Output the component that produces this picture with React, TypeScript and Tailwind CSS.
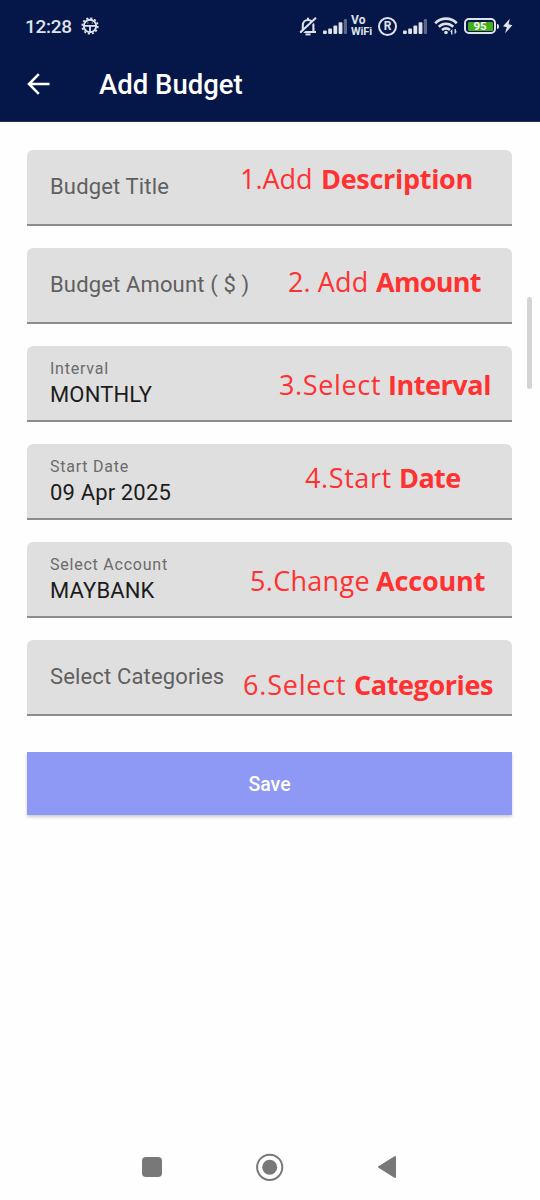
import clsx from "clsx";

const fields = [
    { label: "Budget Title", value: "", step: "1.Add", target: "Description", place: "left-[213px] top-[11px]", stepStyle: "w-[81px]", targetStyle: "tracking-[-0.3px]" },
    { label: "Budget Amount ( $ )", value: "", step: "2. Add", target: "Amount", place: "left-[261px] top-4", stepStyle: "w-[88px] tracking-[0.1px]", targetStyle: "tracking-[-0.7px]" },
    { label: "Interval", value: "MONTHLY", step: "3.Select", target: "Interval", place: "left-[252px] top-[21px]", stepStyle: "w-[109px] tracking-[0.65px]", targetStyle: "tracking-[-0.45px]" },
    { label: "Start Date", value: "09 Apr 2025", step: "4.Start", target: "Date", place: "left-[278px] top-4", stepStyle: "w-[94px] tracking-[0.6px]", targetStyle: "tracking-[-0.6px]" },
    { label: "Select Account", value: "MAYBANK", step: "5.Change", target: "Account", place: "left-[223px] top-[21px]", stepStyle: "w-[126px] tracking-[0.3px]", targetStyle: "tracking-[-0.15px]" },
    { label: "Select Categories", value: "", step: "6.Select", target: "Categories", place: "left-[216px] top-[27px]", stepStyle: "w-[111px] tracking-[0.8px]", targetStyle: "tracking-[-0.4px]" },
];

function Signal({ className }: { className?: string }) {
    return (
        <svg className={clsx("h-[15px] w-[25px] shrink-0", className)} viewBox="0 0 25 15" fill="#dfe2ea">
            <rect x="0" y="11.5" width="3.8" height="3.5" rx="1" />
            <rect x="5.2" y="9.5" width="3.8" height="5.5" rx="1" />
            <rect x="10.4" y="6.5" width="3.8" height="8.5" rx="1" />
            <rect x="15.6" y="3.3" width="3.8" height="11.7" rx="1" />
            <rect x="20.8" y="0" width="3.2" height="15" rx="1" opacity="0.4" />
        </svg>
    );
}

function StatusBar() {
    return (
        <div className="flex h-[52px] items-center pl-[25px] text-[#dfe2ea]">
            <span className="w-[56px] pt-0.5 text-[19px] leading-6 font-medium tracking-[-0.3px]">12:28</span>
            <svg className="h-[18px] w-[18px] shrink-0" viewBox="0 0 18 18" fill="none" stroke="currentColor">
                <circle cx="9" cy="9" r="6.2" strokeWidth="1.9" />
                <circle cx="9" cy="9" r="7.7" strokeWidth="1.8" strokeDasharray="2.1 1.932" />
                <path d="M3 8.8h12M9 9v6" strokeWidth="1.8" />
                <path d="M6.3 6h1M10.7 6h1" strokeWidth="1.2" />
            </svg>

            <svg className="ml-[200px] h-[19px] w-[18px] shrink-0" viewBox="0 0 18 19" fill="none" stroke="currentColor" strokeWidth="2.1">
                <path d="M1 15h16M3.8 15V8.3C3.8 5 6 3 9 3s5.4 2 5.4 5.3V15M9 3V.8" />
                <path d="M17.8 2 2.6 16.4" stroke="#051649" strokeWidth="1.6" />
                <path d="M17 .8 1.2 15.6" />
                <path d="M6.5 17.4h5" strokeWidth="2" />
            </svg>
            <Signal className="ml-[6px]" />
            <div className="ml-[3px] flex w-[23px] shrink-0 flex-col text-[11px] leading-[11px] font-bold">
                <span className="h-[11px] text-[12px] tracking-[0.3px]">Vo</span>
                <span className="h-[11px] tracking-[-0.1px]">WiFi</span>
            </div>
            <div className="ml-[4px] flex h-[19px] w-[19px] shrink-0 items-center justify-center rounded-full border-2 border-[#dfe2ea] text-[12px] leading-none font-bold">R</div>
            <Signal className="ml-[6px]" />
            <svg className="ml-[6px] h-[18px] w-[24px] shrink-0" viewBox="0 0 24 18" fill="none" stroke="currentColor" strokeWidth="2.6">
                <path d="M1.2 6.2C7.4.1 16.6.1 22.8 6.2" />
                <path d="M4.7 9.8c4.3-4 10.3-4 14.6 0" />
                <path d="M8 13.1c2.4-2.1 5.6-2.1 8 0" />
                <circle cx="12" cy="15.5" r="1.8" fill="currentColor" stroke="none" />
                <path d="M16 15.1 18.4 12v5.5h-1.3v-2.4zM23 14.5l-2.4 3.1v-5.5h1.3v2.4z" fill="currentColor" stroke="none" />
            </svg>
            <div className="ml-[6px] flex h-4 w-8 shrink-0 rounded-[5px] border-2 border-[#dfe2ea] p-[1.5px]">
                <div className="flex flex-1 items-center justify-center rounded-[1px] bg-[#43ad1c] pt-px text-[11.5px] leading-none font-bold text-white">95</div>
            </div>
            <div className="ml-px h-[5px] w-[2px] rounded-r bg-[#dfe2ea]"></div>
            <svg className="ml-[3px] h-[16px] w-[11px] shrink-0" viewBox="0 0 11 16" fill="currentColor">
                <path d="M7.8.7 1 8.3l3.8 1L3 15.3l7.4-8L6.6 6.2z" />
            </svg>
        </div>
    );
}

function Header() {
    return (
        <header className="h-[122px] border-b border-[#302f5d] bg-[#051649]">
            <StatusBar />
            <div className="flex h-[64px] items-center pl-[27px] text-white">
                <svg className="h-[22px] w-[23px]" viewBox="0 0 23 22" fill="none" stroke="currentColor" strokeWidth="2.5">
                    <path d="M22.5 11H2.5M11.8 1.2 2 11l9.8 9.8" />
                </svg>
                <h1 className="ml-[49px] pt-px text-[27.5px] leading-8 font-medium">Add Budget</h1>
            </div>
        </header>
    );
}

function Field({ label, value, step, target, place, stepStyle, targetStyle }: (typeof fields)[number]) {
    return (
        <div className="relative h-[76px] rounded-t-md border-b-2 border-[#8c8c8c] bg-[#dfdfdf] pl-[23px]">
            {value ? (
                <div className="flex flex-col pt-[13px]">
                    <span className="text-base leading-5 tracking-[0.77px] text-[#6b6b6b]">{label}</span>
                    <span className="text-[22px] leading-8 tracking-[0.15px] text-[#1c1c1c]">{value}</span>
                </div>
            ) : (
                <div className="pt-[22px] text-[22px] leading-[30px] tracking-[0.15px] text-[#606060]">{label}</div>
            )}
            <div className={clsx("absolute flex font-['Open_Sans',sans-serif] text-[27px] leading-9 whitespace-nowrap text-[#ff3131]", place)}>
                <span className={clsx("font-[370]", stepStyle)}>{step}</span>
                <span className={clsx("font-bold", targetStyle)}>{target}</span>
            </div>
        </div>
    );
}

export default function App() {
    return (
        <div className="relative flex h-[1200px] w-[540px] flex-col overflow-hidden bg-[#fefefe] font-[Roboto,sans-serif]">
            <Header />
            <main className="flex flex-1 flex-col pt-7 pr-7 pl-[27px]">
                <div className="flex flex-col gap-[22px]">
                    {fields.map((field) => (
                        <Field key={field.label} {...field} />
                    ))}
                </div>
                <button className="mt-9 h-[63px] bg-[#8e98f5] pt-[3px] text-[19.5px] font-medium text-white shadow-[0_2px_3px_rgba(0,0,0,0.2)]">Save</button>
            </main>
            <nav className="flex h-[66px] items-center pl-[142px] text-[#787878]">
                <div className="h-5 w-5 rounded-[4px] bg-[#787878]"></div>
                <svg className="ml-[94px] h-7 w-7" viewBox="0 0 28 28" fill="none" stroke="currentColor">
                    <circle cx="13.7" cy="14.3" r="12.6" strokeWidth="2" />
                    <circle cx="13.7" cy="14.3" r="7.5" fill="currentColor" stroke="none" />
                </svg>
                <svg className="ml-[93px] h-6 w-5" viewBox="0 0 20 24" fill="currentColor" stroke="currentColor" strokeWidth="2" strokeLinejoin="round">
                    <path d="M18 2v20L2 12z" />
                </svg>
            </nav>
            {/* scroll thumb */}
            <div className="absolute top-[297px] right-[8px] h-[92px] w-[5px] rounded-full bg-[#d4d4d4]"></div>
        </div>
    );
}
